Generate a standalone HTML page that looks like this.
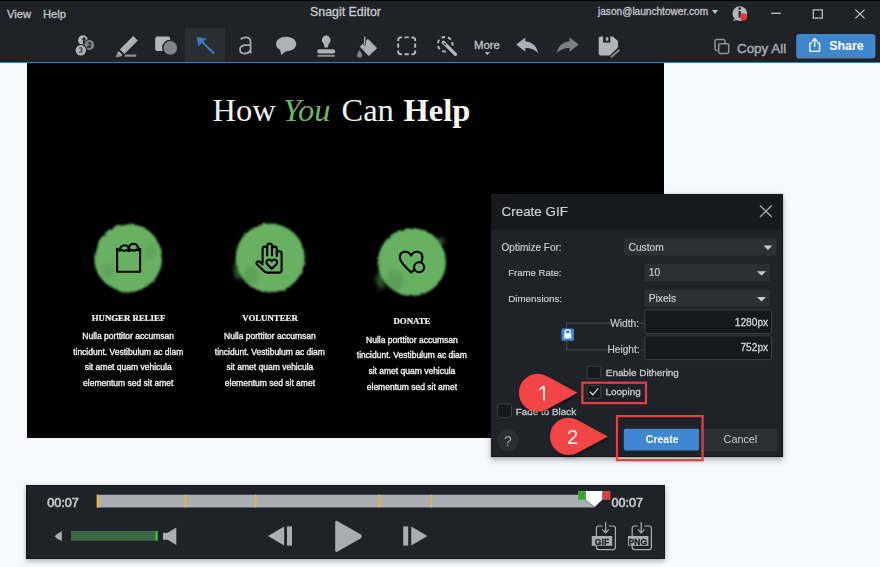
<!DOCTYPE html>
<html><head><meta charset="utf-8">
<style>
*{margin:0;padding:0;box-sizing:border-box}
html,body{width:880px;height:567px;overflow:hidden;background:#f6f9fe;font-family:"Liberation Sans",sans-serif}
.a{position:absolute}
.t{position:absolute;white-space:nowrap;line-height:1}
#top{left:0;top:0;width:880px;height:62px;background:#1f2228}
#topline{left:0;top:0;width:880px;height:1px;background:#000}
#blue{left:0;top:62px;width:880px;height:1px;background:#3d7cbb}
.menu{color:#c4c8cd;font-size:11.2px;-webkit-text-stroke:0.3px #c4c8cd}
#img{left:27px;top:63px;width:637px;height:375px;background:#000}
.serif{font-family:"Liberation Serif",serif}
.col{color:#e6e6e6;font-size:8.5px;text-align:center;width:140px}
.blob{position:absolute;border-radius:50%;background:#65a963}
#dlg{left:491px;top:194px;width:292px;height:263px;background:#1f2228;box-shadow:0 3px 6px rgba(0,0,0,.3),0 0 2px rgba(0,0,0,.2);border-bottom:1px solid #111316;border-right:1px solid #15171a}
#dlghead{left:0;top:0;width:292px;height:35px;background:#191b1e}
.lbl{color:#c4c8cd;font-size:10px}
.dd{position:absolute;background:#2b2f36;border-radius:2px}
.tri{position:absolute;width:0;height:0;border-left:4.5px solid transparent;border-right:4.5px solid transparent;border-top:5px solid #c4c8cd}
.inp{position:absolute;background:#16181b;border:1px solid #393e44;border-radius:2px}
.cb{position:absolute;width:14px;height:14px;background:#16181b;border:1px solid #393e44;border-radius:2px}
#player{left:26px;top:485px;width:639px;height:74px;background:#1f2229;border:1px solid #121418;box-shadow:0 2px 5px rgba(0,0,0,.3)}
</style></head><body>
<div id="top" class="a"></div>
<div id="topline" class="a"></div>
<div class="t menu" style="left:7px;top:8.5px">View</div>
<div class="t menu" style="left:43px;top:8.5px">Help</div>
<div class="t menu" style="left:310px;top:6px;font-size:12.4px;color:#c9cdd2">Snagit Editor</div>
<div class="t menu" style="left:598px;top:7px;font-size:10.1px">jason@launchtower.com</div>
<div class="tri" style="left:712px;top:10px;border-left-width:3.5px;border-right-width:3.5px;border-top-width:4px"></div>


<div class="a" style="left:185px;top:28px;width:40px;height:34px;background:#292d34"></div>
<svg class="a" style="left:0;top:0" width="880" height="62" viewBox="0 0 880 62">
 <!-- step -->
 <g>
  <circle cx="83" cy="40.2" r="4.9" fill="#b0b3b7"/>
  <path d="M81.2 39.6 L84 37 L86.6 39.6 L84.8 39.6 V43.4 H82.8 V39.6 Z" fill="#1f2228"/>
  <circle cx="89.3" cy="45" r="6" fill="#1f2228"/>
  <circle cx="89.3" cy="45" r="4.9" fill="#7f8287"/>
  <circle cx="80.8" cy="50.2" r="6.2" fill="#1f2228"/>
  <circle cx="80.8" cy="50.2" r="5.2" fill="#b0b3b7"/>
  <path d="M87.8 43.4 q1.6 -1.3 3 0 q0.3 1.3 -3 3.6 h3.2" stroke="#2a2d32" stroke-width="1.3" fill="none"/>
  <path d="M79.2 48.2 q1.8 -1 2.8 0.3 q0 1 -1.5 1.5 q1.8 0.3 1.6 1.6 q-1 1.3 -3 0.3" stroke="#4a4d52" stroke-width="1.3" fill="none"/>
 </g>
 <!-- highlighter -->
 <g fill="#aeb1b5">
  <path d="M133.2 36 L137.8 40.6 L124.4 54 L119.8 49.4 Z"/>
  <path d="M118.8 51.2 L122.6 55 L121 56.6 L117.2 52.8 Z"/>
  <path d="M117.2 52.8 L121 56.6 L115.8 57.4 Z" fill="#8e9196"/>
  <path d="M125.4 54.6 H136.2 V56.8 H124.4 Z" fill="#8e9196"/>
 </g>
 <!-- shape -->
 <rect x="155.2" y="36.6" width="15" height="14.5" rx="2.2" fill="#b4b7bb"/>
 <circle cx="170.3" cy="47.9" r="8.2" fill="#1f2228"/>
 <circle cx="170.3" cy="47.9" r="6.8" fill="#808388"/>
 <!-- arrow -->
 <path d="M196.6 37 L206.6 38.6 L203.3 41.6 L215 53 L213.4 54.6 L201.8 43 L198.4 46.4 Z" fill="#3a7cba"/>
 <!-- a -->
 <path d="M240.6 39.2 Q243 37.4 245.8 37.4 Q250.6 37.4 250.6 42.2 V53.6 M250.6 45.2 H246.2 Q240 45.2 240 49.6 Q240 53.6 244.6 53.6 Q248.6 53.6 250.6 50" fill="none" stroke="#a9adb2" stroke-width="1.7"/>
 <!-- callout -->
 <ellipse cx="286.1" cy="44" rx="10.2" ry="7.3" fill="#aeb1b5"/>
 <path d="M280 49 L281.2 55 L287 50.5 Z" fill="#aeb1b5"/>
 <!-- stamp -->
 <g fill="#aeb1b5">
  <circle cx="326.2" cy="40" r="4.4"/>
  <path d="M323.2 42 L329.2 42 L327.8 47.6 L324.6 47.6 Z"/>
  <rect x="317.2" y="49.2" width="18" height="4.4" rx="2.2"/>
  <rect x="317.6" y="54.8" width="17.2" height="2" fill="#8e9196"/>
 </g>
 <!-- fill bucket -->
 <path d="M360.3 46.6 L368 39.4 L376.6 48.2 L368.8 55.6 Z" fill="#aeb1b5" stroke="#aeb1b5" stroke-width="1" stroke-linejoin="round"/>
 <line x1="364.7" y1="36.5" x2="364.7" y2="45.5" stroke="#1f2228" stroke-width="2.6"/>
 <line x1="364.7" y1="36.8" x2="364.7" y2="45.2" stroke="#aeb1b5" stroke-width="1.3"/>
 <path d="M359.6 50 Q357 53.6 357 55.4 Q357 57.6 359.6 57.6 Q362.2 57.6 362.2 55.4 Q362.2 53.6 359.6 50 Z" fill="#80848a"/>
 <!-- select -->
 <g fill="none" stroke="#b4b7bb" stroke-width="1.9">
  <path d="M398.2 41 V40 Q398.2 37.4 400.8 37.4 H402"/>
  <path d="M411.4 37.4 H412.6 Q415.2 37.4 415.2 40 V41"/>
  <path d="M415.2 50.4 V51.4 Q415.2 54.2 412.6 54.2 H411.4"/>
  <path d="M402 54.2 H400.8 Q398.2 54.2 398.2 51.4 V50.4"/>
  <path d="M404.5 37.4 H408.8 M404.5 54.2 H408.8 M398.2 43.6 V47.8 M415.2 43.6 V47.8"/>
 </g>
 <!-- wand -->
 <circle cx="445.2" cy="44.2" r="7.3" fill="none" stroke="#b4b7bb" stroke-width="2" stroke-dasharray="3.6 2.95" transform="rotate(-18 445.2 44.2)"/>
 <line x1="442.6" y1="41.6" x2="456" y2="55" stroke="#1f2228" stroke-width="5.6" stroke-linecap="round"/>
 <line x1="443.4" y1="42.4" x2="455.4" y2="54.4" stroke="#b4b7bb" stroke-width="3.4" stroke-linecap="round"/>
 <line x1="444.2" y1="43.2" x2="445.8" y2="44.8" stroke="#1f2228" stroke-width="1.4"/>
 <!-- More -->
 <text x="474" y="49.4" style="font-family:'Liberation Sans',sans-serif" font-size="11.4" fill="#c0c5cb" stroke="#c0c5cb" stroke-width="0.3">More</text>
 <path d="M484.6 52.3 L490 52.3 L487.3 55 Z" fill="#c0c5cb"/>
 <!-- undo -->
 <path d="M516.2 44.6 L525.3 37.5 L525.3 41.2 Q535.5 42 538.4 53.2 Q533 47.8 525.3 48 L525.3 51.7 Z" fill="#a9afb6"/>
 <!-- redo -->
 <path d="M578.7 44.6 L569.6 37.5 L569.6 41.2 Q559.4 42 556.4 53.2 Q562 47.8 569.6 48 L569.6 51.7 Z" fill="#7b8086"/>
 <!-- save -->
 <path d="M600.7 36.5 H613 L618 41.3 V47.4 L609.8 55.5 H600.7 Q598.7 55.5 598.7 53.5 V38.5 Q598.7 36.5 600.7 36.5 Z" fill="#b0b5bb"/>
 <rect x="603.1" y="36" width="7.2" height="6.6" fill="#1f2228"/>
 <rect x="605.9" y="37.2" width="2.4" height="3.5" fill="#b0b5bb"/>
 <line x1="610.2" y1="57.8" x2="619.8" y2="49.2" stroke="#1f2228" stroke-width="3.6"/>
 <line x1="611" y1="57.2" x2="619.4" y2="49.8" stroke="#878c92" stroke-width="1.9"/>
 <!-- copy -->
 <path d="M717.8 50.4 H716.6 Q715 50.4 715 48.8 V41.2 Q715 39.6 716.6 39.6 H723.4 Q725 39.6 725 41.2 V43" fill="none" stroke="#8e9297" stroke-width="1.5"/>
 <rect x="718.7" y="43.7" width="10" height="9.8" rx="1.4" fill="none" stroke="#8e9297" stroke-width="1.5"/>
 <text x="737" y="52.6" style="font-family:'Liberation Sans',sans-serif" font-size="13.4" fill="#a6aaaf" stroke="#a6aaaf" stroke-width="0.45">Copy All</text>
 <!-- share -->
 <rect x="796.2" y="34.1" width="79.2" height="24.4" rx="3" fill="#3f87cc"/>
 <path d="M812 43 H810.6 Q809.8 43 809.8 43.8 V50.6 Q809.8 51.4 810.6 51.4 H818.8 Q819.6 51.4 819.6 50.6 V43.8 Q819.6 43 818.8 43 H817.4" fill="none" stroke="#ffffff" stroke-width="1.4"/>
 <path d="M814.7 46.8 V39.2 M812 41.6 L814.7 38.8 L817.4 41.6" fill="none" stroke="#ffffff" stroke-width="1.4"/>
 <text x="829.2" y="49.8" style="font-family:'Liberation Sans',sans-serif" font-weight="bold" font-size="12.4" fill="#ffffff">Share</text>
 <!-- title bar icons -->
 <circle cx="739.8" cy="13.6" r="7.3" fill="#b3b6ba"/>
 <path d="M734 19 L733 21 L737 20 Z" fill="#b3b6ba"/>
 <rect x="738.6" y="11" width="2.2" height="6.5" fill="#1f2228"/>
 <circle cx="739.7" cy="8.6" r="1.3" fill="#1f2228"/>
 <circle cx="743.6" cy="16.8" r="3.6" fill="#e8333a"/>
 <rect x="771" y="12.7" width="10" height="1.2" fill="#c4c8cd"/>
 <rect x="813.3" y="9.9" width="9" height="8.2" fill="none" stroke="#c4c8cd" stroke-width="1.2"/>
 <path d="M855.3 9.6 L864.6 18.4 M864.6 9.6 L855.3 18.4" stroke="#c4c8cd" stroke-width="1.2"/>
</svg>
<div id="blue" class="a"></div><div class="a" style="left:0;top:63px;width:880px;height:1px;background:#fdfeff"></div>

<div id="img" class="a"></div>
<svg class="a" style="left:0;top:0" width="880" height="567" viewBox="0 0 880 567">
 <defs>
  <filter id="rough" x="-20%" y="-20%" width="140%" height="140%">
   <feTurbulence type="fractalNoise" baseFrequency="0.15" numOctaves="2" seed="3"/>
   <feDisplacementMap in="SourceGraphic" scale="3"/>
   <feGaussianBlur stdDeviation="0.8"/>
  </filter>
  <filter id="soft" x="-50%" y="-50%" width="200%" height="200%"><feGaussianBlur stdDeviation="2"/></filter>
 </defs>
 <g style="font-family:'Liberation Serif',serif" font-size="32.5">
  <text x="212.5" y="121" fill="#f2f2f2">How</text>
  <text x="283" y="121" fill="#6cb866" font-style="italic">You</text>
  <text x="341.5" y="121" fill="#f2f2f2">Can</text>
  <text x="403.5" y="121" fill="#f7f7f7" font-weight="bold">Help</text>
 </g>
 <g fill="#68b163" filter="url(#rough)">
  <circle cx="128.2" cy="258" r="34"/>
  <circle cx="270.2" cy="258" r="34.5"/>
  <circle cx="412" cy="262" r="34"/>
 </g>
 <g filter="url(#soft)">
  <ellipse cx="126" cy="287" rx="8" ry="5" fill="#68b163" opacity="0.8"/>
  <ellipse cx="440" cy="241" rx="5" ry="3" fill="#68b163" opacity="0.5"/>
  <ellipse cx="238" cy="270" rx="4" ry="10" fill="#68b163" opacity="0.5"/>
  <ellipse cx="381" cy="280" rx="5" ry="9" fill="#68b163" opacity="0.45"/>
  <ellipse cx="250" cy="276" rx="9" ry="10" fill="#000" opacity="0.09"/>
  <ellipse cx="394" cy="281" rx="10" ry="11" fill="#000" opacity="0.1"/>
  <ellipse cx="108" cy="270" rx="6" ry="8" fill="#000" opacity="0.08"/>
  <ellipse cx="150" cy="252" rx="6" ry="8" fill="#000" opacity="0.08"/>
 </g>
 <g fill="none" stroke="#000" stroke-width="2.1" stroke-linejoin="round" stroke-linecap="round">
  <path d="M117.1 248.8 V271.7 H140.1 V248.8"/>
  <path d="M117.1 248.8 Q119 251.2 121.5 249.8 Q124 251.8 126.5 250 Q129 252 131.5 249.8 Q134 251.6 136.5 249.6 Q138.5 250.8 140.1 248.8"/>
  <path d="M119.6 250.4 Q120.2 245.4 124.6 245.2 Q129 245.4 129.8 250.4"/>
  <path d="M128.4 249.4 Q129 244 133.4 243.8 Q137.8 244 138.4 249.4"/>
  <path d="M262.6 262.5 V249 Q262.6 246.6 264.9 246.6 Q267.2 246.6 267.2 249 V255.5 M267.2 255.5 V246 Q267.2 243.6 269.6 243.6 Q272 243.6 272 246 V255.5 M272 255.5 V249 Q272 246.6 274.4 246.6 Q276.8 246.6 276.8 249 V256 M276.8 256 V253.6 Q276.8 251.3 279.2 251.3 Q281.6 251.3 281.6 253.6 V270 Q281.6 272.6 279 272.6 H266.8 Q265.6 272.6 264.8 271.8 L257 264.4 Q255.8 263 257.2 261.8 Q258.6 260.8 260 262 L262.6 264.4"/>
  <path d="M271.8 268.6 L267.6 264.8 Q265.8 262.8 266.6 261.2 Q267.8 259.4 269.6 259.6 Q271 259.8 271.8 261.2 Q272.6 259.8 274 259.6 Q275.8 259.4 277 261.2 Q277.8 262.8 276 264.8 Z"/>
  <path d="M414.4 269.6 L411.1 272.4 C406 267.6 400.4 262.8 399.9 258.2 C399.6 255.4 400.8 252.4 404.2 251.8 C406.5 251.4 409.5 252.6 411.1 255.6 C412.7 252.6 415.7 251.4 418 251.8 C421.4 252.4 422.6 255.4 422.4 258.2 C422.3 259.5 421.9 260.7 421.3 261.9"/>
  <circle cx="419.1" cy="267.2" r="5"/>
 </g>
 <g style="font-family:'Liberation Serif',serif" font-weight="bold" font-size="8.8" fill="#f4f4f4" stroke="#f4f4f4" stroke-width="0.2" text-anchor="middle">
  <text x="128.5" y="320.9">HUNGER RELIEF</text>
  <text x="270" y="321">VOLUNTEER</text>
  <text x="412" y="324.4">DONATE</text>
 </g>
 <g style="font-family:'Liberation Sans',sans-serif" font-size="8.5" fill="#f0f0f0" stroke="#f0f0f0" stroke-width="0.35" text-anchor="middle">
  <text x="128.2" y="339">Nulla porttitor accumsan</text>
  <text x="128.2" y="354.6">tincidunt. Vestibulum ac diam</text>
  <text x="128.2" y="370.4">sit amet quam vehicula</text>
  <text x="128.2" y="386.2">elementum sed sit amet</text>
  <text x="269.9" y="339">Nulla porttitor accumsan</text>
  <text x="269.9" y="354.6">tincidunt. Vestibulum ac diam</text>
  <text x="269.9" y="370.4">sit amet quam vehicula</text>
  <text x="269.9" y="386.2">elementum sed sit amet</text>
  <text x="411.9" y="342.8">Nulla porttitor accumsan</text>
  <text x="411.9" y="358.4">tincidunt. Vestibulum ac diam</text>
  <text x="411.9" y="374.2">sit amet quam vehicula</text>
  <text x="411.9" y="390">elementum sed sit amet</text>
 </g>
</svg>

<div id="dlg" class="a"></div>
<svg class="a" style="left:0;top:0" width="880" height="567" viewBox="0 0 880 567">
 <rect x="491" y="194" width="292" height="35.5" fill="#171a1d"/>
 <g style="font-family:'Liberation Sans',sans-serif" fill="#c6cacf" stroke="#c6cacf" stroke-width="0.2">
  <text x="501.6" y="215.8" font-size="13.4" fill="#cfd3d7">Create GIF</text>
  <text x="501.6" y="250.7" font-size="10">Optimize For:</text>
  <text x="508.2" y="276" font-size="9.6">Frame Rate:</text>
  <text x="508.2" y="302" font-size="9.8">Dimensions:</text>
 </g>
 <path d="M760 205.6 L771.8 217 M771.8 205.6 L760 217" stroke="#a2a7ac" stroke-width="1.4"/>
 <rect x="624" y="238.3" width="152.6" height="17.4" rx="2" fill="#2b2f36"/>
 <rect x="644.2" y="263.7" width="126.1" height="17.8" rx="2" fill="#2b2f36"/>
 <rect x="644.2" y="289.6" width="126.1" height="17.4" rx="2" fill="#2b2f36"/>
 <path d="M763.5 245.5 H772.4 L768 250 Z M757 271.2 H766 L761.5 275.6 Z M757 297 H766 L761.5 301.4 Z" fill="#c8ccd1"/>
 <g style="font-family:'Liberation Sans',sans-serif" fill="#c8ccd1" font-size="10.2" stroke="#c8ccd1" stroke-width="0.2">
  <text x="628.6" y="251">Custom</text>
  <text x="648.8" y="276.4">10</text>
  <text x="648.8" y="301.9">Pixels</text>
 </g>
 <rect x="644.8" y="309.9" width="126.7" height="23.6" rx="2" fill="#16181b" stroke="#3a4046" stroke-width="1"/>
 <rect x="644.8" y="335.8" width="126.7" height="23.8" rx="2" fill="#16181b" stroke="#3a4046" stroke-width="1"/>
 <g style="font-family:'Liberation Sans',sans-serif" fill="#d0d4d8" font-size="10.2" text-anchor="end" stroke="#d0d4d8" stroke-width="0.3">
  <text x="768.2" y="326">1280px</text>
  <text x="768.2" y="351.1">752px</text>
 </g>
 <path d="M566.6 328 V323.2 H612 M566.6 341 V349.9 H608 M639.5 323.2 H644.5 M640 349.9 H644.5" fill="none" stroke="#3b4649" stroke-width="1.4"/>
 <g style="font-family:'Liberation Sans',sans-serif" fill="#c6cacf" font-size="10.2" stroke="#c6cacf" stroke-width="0.2">
  <text x="610.2" y="327.2">Width:</text>
  <text x="607.4" y="353">Height:</text>
 </g>
 <rect x="561.5" y="328.4" width="12.4" height="12.4" rx="1.5" fill="#3f8ad2"/>
 <path d="M565.2 333.2 V331.6 Q565.2 329.6 567.7 329.6 Q570.2 329.6 570.2 331.6 V333.2" fill="none" stroke="#fff" stroke-width="1.2"/>
 <rect x="564.2" y="333.2" width="7" height="5.2" fill="#fff"/>
 <rect x="587.1" y="366.2" width="13.5" height="12.5" rx="2" fill="#16181b" stroke="#3a4046"/>
 <rect x="587.1" y="385.5" width="13.5" height="12.8" rx="2" fill="#16181b" stroke="#3a4046"/>
 <rect x="497.5" y="403.9" width="14" height="13.5" rx="2" fill="#16181b" stroke="#3a4046"/>
 <path d="M589.8 391.6 L592.8 394.8 L598.2 388.4" fill="none" stroke="#d6dade" stroke-width="1.3"/>
 <g style="font-family:'Liberation Sans',sans-serif" fill="#c6cacf" font-size="9.9" stroke="#c6cacf" stroke-width="0.3">
  <text x="605.8" y="375.8">Enable Dithering</text>
  <text x="605.5" y="395">Looping</text>
  <text x="515.8" y="414.5">Fade to Black</text>
 </g>
 <circle cx="508" cy="440.2" r="10.8" fill="#2b2f35"/>
 <text x="504" y="445.6" style="font-family:'Liberation Sans',sans-serif" font-size="14" fill="#9ea3a8">?</text>
 <rect x="623.8" y="428.8" width="75.3" height="21.7" rx="2" fill="#4087cf"/>
 <rect x="700" y="428.8" width="77.5" height="22.2" rx="2" fill="#2b2f36"/>
 <text x="645.8" y="442.7" style="font-family:'Liberation Sans',sans-serif" font-weight="bold" font-size="10.5" fill="#ffffff">Create</text>
 <text x="723.6" y="442.6" style="font-family:'Liberation Sans',sans-serif" font-size="10.8" fill="#c6cacf">Cancel</text>
 <rect x="582.4" y="382.7" width="63.6" height="20.4" fill="none" stroke="#ea3f3f" stroke-width="2.2"/>
 <rect x="617" y="416.1" width="85.6" height="44" fill="none" stroke="#ea3f3f" stroke-width="2.2"/>
 <defs>
  <filter id="cshadow" x="-30%" y="-30%" width="160%" height="160%">
   <feDropShadow dx="1" dy="2" stdDeviation="1.6" flood-color="#000" flood-opacity="0.45"/>
  </filter>
 </defs>
 <g fill="#f24444" filter="url(#cshadow)">
  <path d="M577.5 392.7 L547 376.2 A18.9 18.9 0 1 0 547 409.2 Z"/>
  <path d="M607.9 436.4 L577 419.8 A18.6 18.6 0 1 0 577 453 Z"/>
 </g>
 <g style="font-family:'Liberation Sans',sans-serif" font-size="20" fill="#f4f4f4" text-anchor="middle">
  
  <text x="572.6" y="443.8">2</text>
 </g>
 <path d="M544 386 V400.4 M544 386.2 L539.4 389.6" fill="none" stroke="#f4f4f4" stroke-width="1.7"/>
</svg>
<div id="player" class="a"></div>
<svg class="a" style="left:0;top:0" width="880" height="567" viewBox="0 0 880 567">
 <g style="font-family:'Liberation Sans',sans-serif" font-size="12.6" fill="#c4c9ce" stroke="#c4c9ce" stroke-width="0.65">
  <text x="47.3" y="507">00:07</text>
  <text x="611.4" y="506.8">00:07</text>
 </g>
 <path d="M96.6 494.7 H586 V499.8 L594.7 507.4 H96.6 Z" fill="#a9aeb5"/>
 <g fill="#f2b22c">
  <rect x="97" y="494.7" width="2" height="12.9"/>
  <rect x="184.8" y="494.7" width="1.6" height="12.7"/>
  <rect x="254.8" y="494.7" width="1.6" height="12.7"/>
  <rect x="378.6" y="494.7" width="1.6" height="12.7"/>
  <rect x="430.6" y="494.7" width="1.6" height="12.7"/>
 </g>
 <rect x="578" y="491" width="8" height="8.8" fill="#3fb23a"/>
 <path d="M579.6 492.6 V498.2 M581.6 492.6 V498.2 M583.6 492.6 V498.2" stroke="#2e8a2b" stroke-width="0.8"/>
 <rect x="602.2" y="491" width="8.2" height="8.8" fill="#e24a4a"/>
 <path d="M604.2 492.6 V498.2 M606.2 492.6 V498.2 M608.2 492.6 V498.2" stroke="#b23636" stroke-width="0.8"/>
 <path d="M586 491 H602.2 V499.8 L594.7 507 L586 499.8 Z" fill="#ffffff"/>
 <path d="M54.6 536.2 L58 533.2 H61.8 V539.4 H58 Z M54.6 536.2 L61.8 531 V541.3 Z" fill="#a9aeb5"/>
 <rect x="71" y="531" width="86.5" height="9.7" fill="#3b6843"/>
 <rect x="155.6" y="531" width="2" height="9.7" fill="#2fcf3f"/>
 <path d="M163 532.8 H167.6 L176.3 527.4 V545 L167.6 539.8 H163 Z" fill="#a9aeb5"/>
 <path d="M268 536 L284.2 526.4 V545.6 Z" fill="#a9aeb5"/>
 <rect x="287" y="526.4" width="5" height="19.2" fill="#a9aeb5"/>
 <path d="M335.2 522.6 Q335.2 520 337.6 521.2 L361 534.6 Q362.6 536.4 361 538.2 L337.6 551.6 Q335.2 552.8 335.2 550.2 Z" fill="#a9aeb5"/>
 <rect x="403.2" y="526.4" width="5" height="19.2" fill="#a9aeb5"/>
 <path d="M427.5 536 L411.2 526.4 V545.6 Z" fill="#a9aeb5"/>
 <g fill="none" stroke="#a9aeb5" stroke-width="1.2">
  <path d="M596.4 537 V528.4 Q596.4 526 598.8 526 H602.6 M608.6 526 H613 Q615.4 526 615.4 528.4 V547.2 Q615.4 549.6 613 549.6 H598.8 Q596.4 549.6 596.4 547.2 V546"/>
  <path d="M605.6 522 V532.6 M602.4 529.4 L605.6 532.8 L608.8 529.4"/>
  <path d="M632.2 537 V528.4 Q632.2 526 634.6 526 H638 M644.4 526 H649 Q651.4 526 651.4 528.4 V547.2 Q651.4 549.6 649 549.6 H634.6 Q632.2 549.6 632.2 547.2 V546"/>
  <path d="M641.2 522 V532.6 M638 529.4 L641.2 532.8 L644.4 529.4"/>
 </g>
 <rect x="591.8" y="536" width="20.4" height="9.8" fill="#a9aeb5"/>
 <rect x="628" y="536" width="20.4" height="9.8" fill="#a9aeb5"/>
 <g style="font-family:'Liberation Sans',sans-serif" font-weight="bold" font-size="8.6" fill="#1f2228" stroke="#1f2228" stroke-width="0.3" text-anchor="middle">
  <text x="602" y="544.6">GIF</text>
  <text x="637.9" y="544.6">PNG</text>
 </g>
</svg>

</body></html>
